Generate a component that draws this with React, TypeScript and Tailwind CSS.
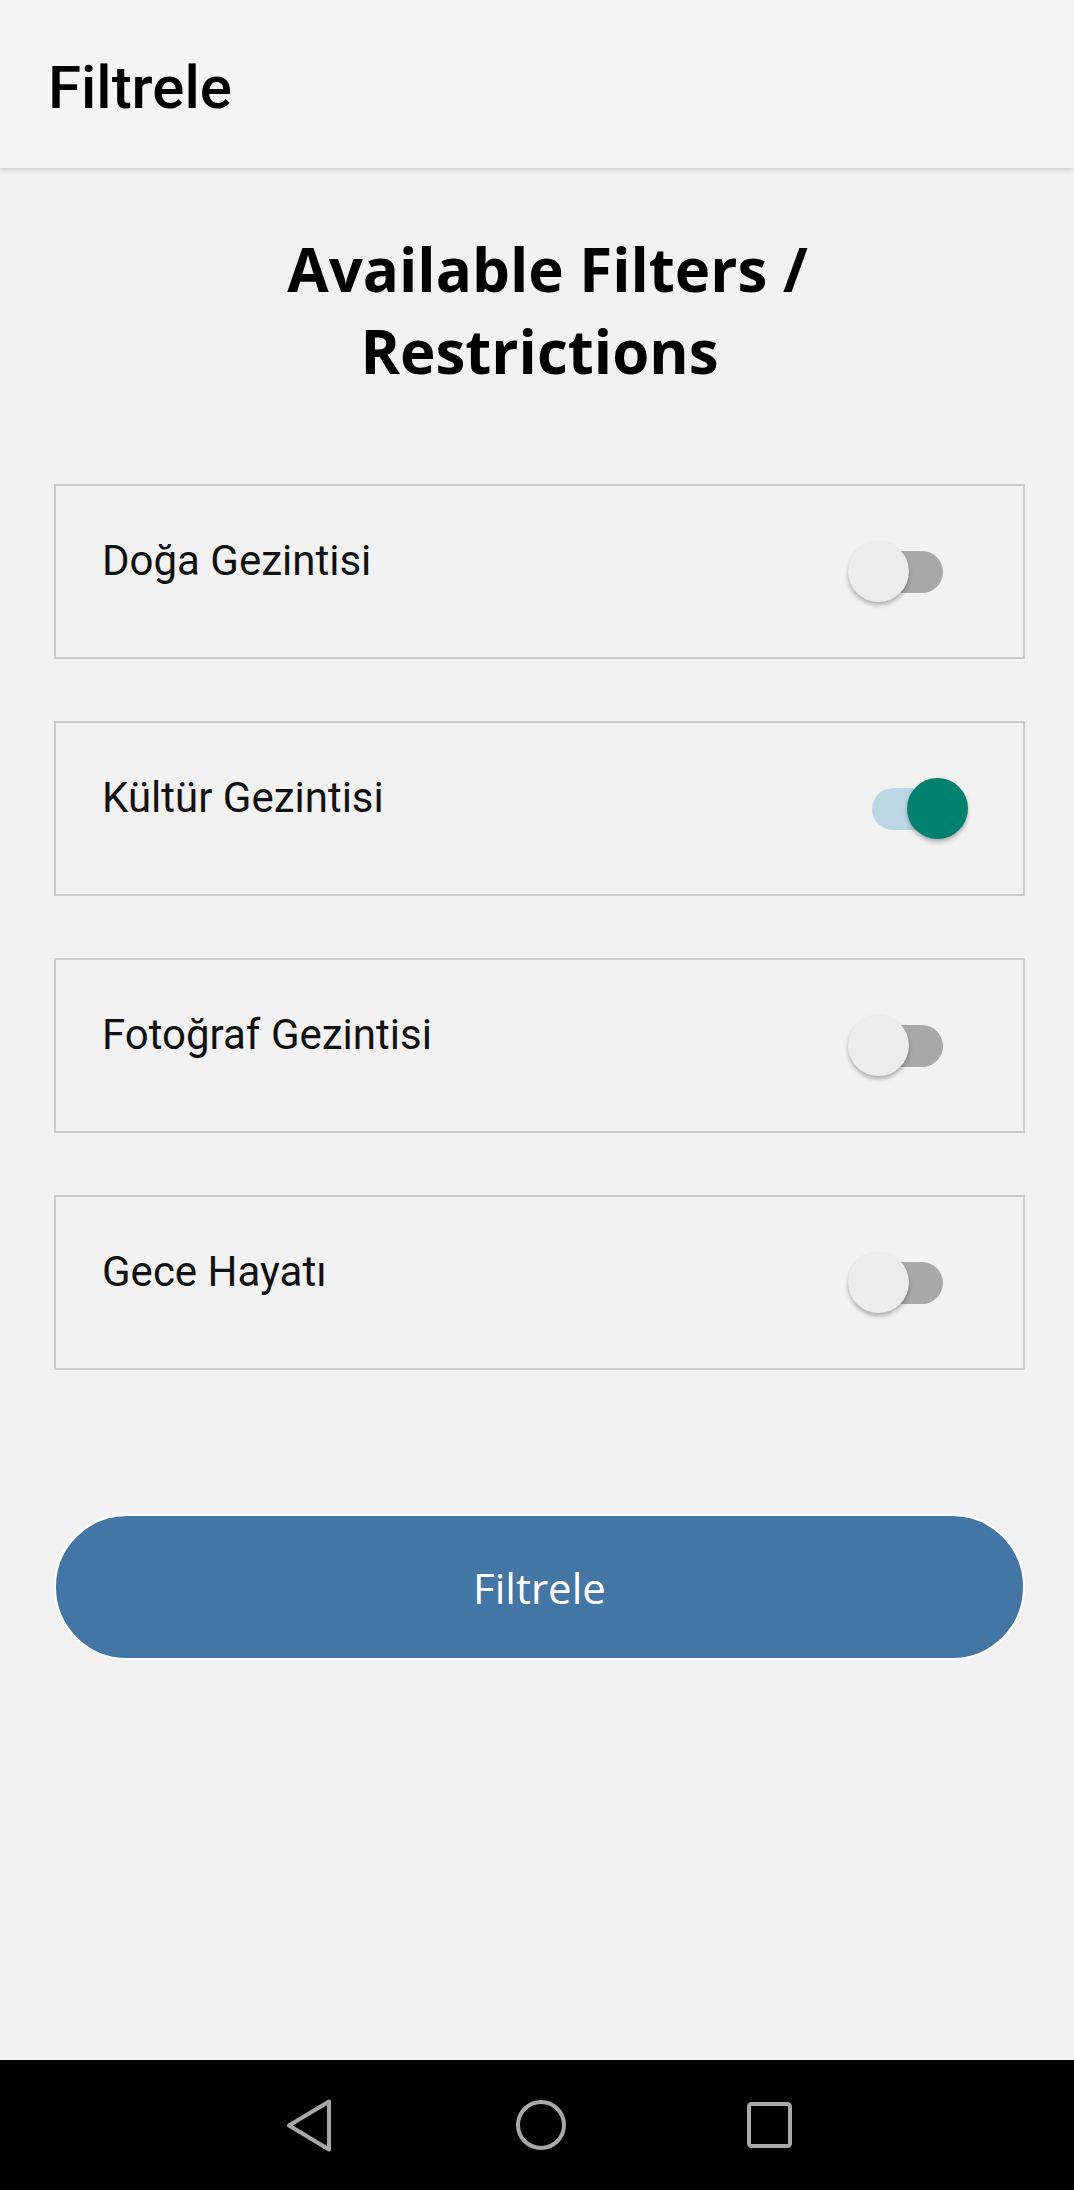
import React from "react";

const filters = [
  { label: "Doğa Gezintisi", on: false },
  { label: "Kültür Gezintisi", on: true },
  { label: "Fotoğraf Gezintisi", on: false },
  { label: "Gece Hayatı", on: false },
];

const Toggle = ({ on }: { on: boolean }) => (
  <div className="relative w-[120px] h-[61px] shrink-0">
    <div
      className={`absolute left-[24px] top-[10px] w-[71px] h-[42px] rounded-full ${
        on ? "bg-[#bdd6e6]" : "bg-[#a9a9a9]"
      }`}
    />
    <div
      className={`absolute top-0 w-[61px] h-[61px] rounded-full shadow-[0_3px_4px_rgba(0,0,0,0.28)] ${
        on ? "right-0 bg-[#00816f]" : "left-0 bg-[#ececec]"
      }`}
    />
  </div>
);

const FilterCard = ({ label, on }: { label: string; on: boolean }) => (
  <div className="h-[175px] border-2 border-[#cccccc] flex items-center justify-between pl-[46px] pr-[55px]">
    <span className="font-['Roboto',sans-serif] text-[42px] text-[#111] pb-[22px]">{label}</span>
    <Toggle on={on} />
  </div>
);

export default function App() {
  return (
    <div className="w-[1074px] h-[2190px] flex flex-col bg-[#f2f2f2]">
      {/* Toolbar */}
      <header className="relative z-10 h-[168px] shrink-0 bg-[#f5f5f5] shadow-[0_2px_5px_rgba(0,0,0,0.16)] flex items-center pl-[48px] pt-[7px]">
        <h1 className="font-['Roboto',sans-serif] font-medium text-[60px] text-black">Filtrele</h1>
      </header>

      {/* Content */}
      <main className="flex-1 flex flex-col">
        <h2 className="mt-[60px] ml-[54px] w-[971px] text-center font-['Open_Sans',sans-serif] font-bold text-[60px] leading-[82px] text-black">
          <span className="block pl-[16px]">Available Filters /</span>
          <span className="block">Restrictions</span>
        </h2>

        <div className="mt-[92px] ml-[54px] w-[971px] flex flex-col gap-[62px]">
          {filters.map((f) => (
            <FilterCard key={f.label} label={f.label} on={f.on} />
          ))}
        </div>

        <button className="mt-[144px] ml-[54px] w-[971px] h-[146px] rounded-full border-2 border-white bg-[#4375a5] text-white font-['Open_Sans',sans-serif] text-[42px]">
          Filtrele
        </button>
      </main>

      {/* Android nav bar */}
      <nav className="h-[130px] shrink-0 bg-black flex items-center pl-[286px]">
        <svg width="46" height="53" viewBox="0 0 46 53" fill="none" stroke="#a8a8a8" strokeWidth="4" strokeLinejoin="round">
          <path d="M43 2.5 L43 50.5 L3 26.5 Z" />
        </svg>
        <svg className="ml-[182px]" width="54" height="54" viewBox="0 0 54 54" fill="none" stroke="#a8a8a8" strokeWidth="4">
          <circle cx="27" cy="27" r="23" />
        </svg>
        <svg className="ml-[178px]" width="48" height="49" viewBox="0 0 48 49" fill="none" stroke="#a8a8a8" strokeWidth="4">
          <rect x="3" y="3" width="41" height="42" rx="2.5" />
        </svg>
      </nav>
    </div>
  );
}
